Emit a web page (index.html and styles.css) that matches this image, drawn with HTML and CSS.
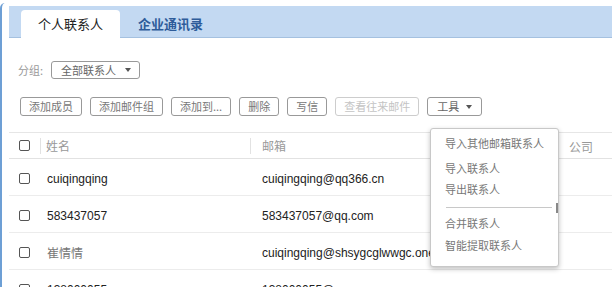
FILE: index.html
```html
<!DOCTYPE html>
<html lang="zh">
<head>
<meta charset="utf-8">
<link rel="stylesheet" href="styles.css">
</head>
<body>
<div class="frame">
  <div class="tabbar">
    <div class="tab active">个人联系人</div>
    <div class="tab">企业通讯录</div>
  </div>
  <div class="group-row">
    <span class="group-label">分组:</span>
    <span class="select">全部联系人 <i class="caret"></i></span>
  </div>
  <div class="toolbar">
    <span class="btn">添加成员</span>
    <span class="btn">添加邮件组</span>
    <span class="btn">添加到...</span>
    <span class="btn">删除</span>
    <span class="btn">写信</span>
    <span class="btn disabled">查看往来邮件</span>
    <span class="btn tools">工具 <i class="caret"></i></span>
  </div>
  <div class="table">
    <div class="row head">
      <span class="cb"></span>
      <span class="col name">姓名</span>
      <span class="col mail">邮箱</span>
      <span class="col comp">公司</span>
    </div>
    <div class="row">
      <span class="cb"></span>
      <span class="col name">cuiqingqing</span>
      <span class="col mail">cuiqingqing@qq366.cn</span>
    </div>
    <div class="row">
      <span class="cb"></span>
      <span class="col name">583437057</span>
      <span class="col mail">583437057@qq.com</span>
    </div>
    <div class="row">
      <span class="cb"></span>
      <span class="col name cn">崔情情</span>
      <span class="col mail">cuiqingqing@shsygcglwwgc.onexmail.com</span>
    </div>
    <div class="row">
      <span class="cb"></span>
      <span class="col name">138000055</span>
      <span class="col mail">138000055@qq.com</span>
    </div>
  </div>
  <div class="menu">
    <div class="item">导入其他邮箱联系人</div>
    <div class="item">导入联系人</div>
    <div class="item">导出联系人</div>
    <div class="divider"></div>
    <div class="item">合并联系人</div>
    <div class="item last">智能提取联系人</div>
    <span class="thumb"></span>
  </div>
</div>
</body>
</html>
```
FILE: styles.css
```css
html, body {
  margin: 0;
  padding: 0;
  background: #fff;
  overflow: hidden;
}
body {
  font-family: "Noto Sans CJK SC", "Liberation Sans", sans-serif;
  font-size: 12px;
  color: #333;
  width: 612px;
  height: 287px;
}
.frame {
  position: relative;
  margin-top: 3px;
  height: 284px;
  border-left: 2px solid #6d9fd5;
  border-top-left-radius: 5px;
  padding-left: 7px;
  padding-top: 3px;
  box-sizing: border-box;
}
.tabbar {
  height: 32px;
  background: #c3d9f2;
  border-bottom: 1px solid #a5c1e0;
  box-sizing: border-box;
  display: flex;
  align-items: flex-end;
  padding-left: 12px;
}
.tab {
  height: 28px;
  line-height: 28px;
  font-size: 13px;
  margin-bottom: -1px;
  padding: 0 18px;
  color: #2e5c9a;
  font-weight: bold;
}
.tab.active {
  width: 99px;
  box-sizing: border-box;
  text-align: center;
  background: #fff;
  color: #222;
  font-weight: normal;
  border-radius: 4px 4px 0 0;
  padding: 0;
}
.group-row {
  display: flex;
  align-items: center;
  height: 18px;
  margin-top: 23px;
  padding-left: 9px;
  font-size: 11px;
}
.group-label {
  color: #999;
  width: 33px;
}
.select {
  height: 18px;
  box-sizing: border-box;
  border: 1px solid #999;
  border-radius: 3px;
  padding: 0 8px 0 9px;
  line-height: 16px;
  color: #666;
  display: flex;
  align-items: center;
  gap: 9px;
}
.caret {
  display: inline-block;
  width: 0;
  height: 0;
  border-left: 3.5px solid transparent;
  border-right: 3.5px solid transparent;
  border-top: 4px solid #555;
}
.toolbar {
  display: flex;
  gap: 8px;
  margin-top: 18px;
  padding-left: 11px;
  height: 19px;
  font-size: 11px;
}
.btn {
  height: 19px;
  box-sizing: border-box;
  border: 1px solid #999;
  border-radius: 3px;
  padding: 0 8px;
  line-height: 17px;
  color: #777;
  display: flex;
  align-items: center;
  gap: 7px;
  letter-spacing: 0;
}
.btn.disabled {
  color: #c4c4c4;
  border-color: #cdcdcd;
}
.btn.tools {
  color: #666;
  padding: 0 9px 0 9px;
}
.table {
  margin-top: 16px;
}
.row {
  display: flex;
  align-items: center;
  height: 37px;
  box-sizing: border-box;
  padding-top: 3px;
  border-bottom: 1px solid #ececec;
  font-family: "Liberation Sans", "Noto Sans CJK SC", sans-serif;
  font-size: 12px;
  color: #222;
}
.row.head {
  height: 27px;
  padding-top: 1px;
  border-top: 1px solid #e6e6e6;
  border-bottom: 1px solid #e2e2e2;
  font-family: "Noto Sans CJK SC", sans-serif;
  color: #999;
}
.cb {
  width: 11px;
  height: 11px;
  box-sizing: border-box;
  border: 1px solid #555;
  border-radius: 2px;
  margin-left: 10px;
  flex: none;
}
.row .cb {
  margin-top: -1px;
}
.col {
  white-space: nowrap;
  flex: none;
}
.col.name {
  width: 231px;
  padding-left: 16px;
  box-sizing: border-box;
  margin-left: 1px;
}
.col.cn {
  font-family: "Noto Sans CJK SC", sans-serif;
  color: #777;
}
.head .col.name {
  border-left: 1px solid #e2e2e2;
  padding-left: 5px;
  margin-left: 10px;
  width: 210px;
  line-height: 16px;
}
.head .col.mail {
  border-left: 1px solid #e2e2e2;
  padding-left: 11px;
  width: 318px;
  box-sizing: border-box;
  line-height: 16px;
}
.col.mail {
  width: 300px;
}
.col.comp {
  padding-left: 1px;
}
.menu {
  position: absolute;
  left: 428px;
  top: 125px;
  width: 129px;
  height: 139px;
  box-sizing: border-box;
  background: #fff;
  border: 1px solid #c8c8c8;
  border-radius: 3px;
  box-shadow: 0 2px 5px rgba(0,0,0,0.25);
  padding: 4px 0 0 14px;
  font-family: "Noto Sans CJK SC", sans-serif;
  font-size: 11px;
  color: #777;
}
.item {
  height: 21px;
  line-height: 21px;
}
.item:nth-child(2) {
  margin-top: 4px;
}
.item.last {
  margin-top: 1px;
}
.divider {
  width: 106px;
  height: 1px;
  background: #c8c8c8;
  margin: 7px 0 5px 1px;
}
.thumb {
  position: absolute;
  right: 0;
  top: 74px;
  width: 2px;
  height: 10px;
  background: #888;
}
```
